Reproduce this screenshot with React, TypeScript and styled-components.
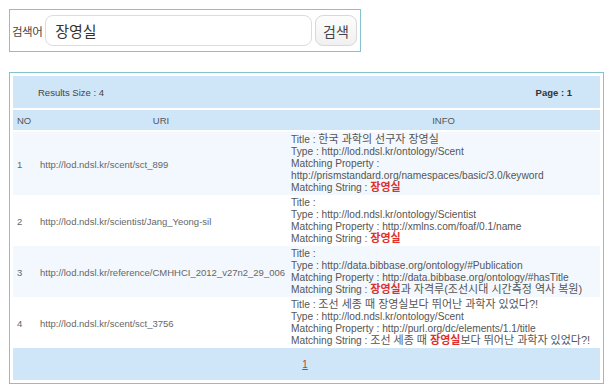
import styled, { createGlobalStyle } from 'styled-components';

const GlobalStyle = createGlobalStyle`
  body {
    margin: 0;
    background: #fff;
    font-family: "Liberation Sans", Arial, "Noto Sans CJK KR", sans-serif;
    color: #555;
  }
`;

const SearchBox = styled.form`
  margin: 9px 0 0 9px;
  width: 352px;
  height: 43px;
  box-sizing: border-box;
  border: 1px solid #84c3cb;
  display: flex;
  align-items: center;
  padding: 0 3px 0 2px;
  gap: 3px;
`;

const SearchLabel = styled.label`
  font-size: 11.5px;
  color: #444;
  letter-spacing: -0.5px;
`;

const SearchInput = styled.input`
  flex: 1;
  height: 31px;
  box-sizing: border-box;
  border: 1px solid #dcdcdc;
  border-radius: 8px;
  padding: 0 9px;
  font-size: 15px;
  color: #333;
  font-family: "Noto Sans CJK KR", sans-serif;
  outline: none;
`;

const SearchButton = styled.button`
  width: 42px;
  height: 31px;
  border: 1px solid #d8d8d8;
  border-radius: 8px;
  background: linear-gradient(#fdfdfd, #f0f0f0);
  font-size: 14px;
  color: #444;
  font-family: "Noto Sans CJK KR", sans-serif;
  padding: 0;
`;

const Panel = styled.div`
  margin: 20px 0 0 9px;
  width: 595px;
  box-sizing: border-box;
  border: 1px solid #84c3cb;
  padding: 3px;
`;

const Bar = styled.div<{ $center?: boolean }>`
  height: 32px;
  background: #cfe5f8;
  display: flex;
  align-items: center;
  justify-content: ${p => (p.$center ? 'center' : 'space-between')};
  padding: 0 28px 0 25px;
  font-size: 9.5px;
  color: #444;
`;

const PageLabel = styled.span`
  font-weight: bold;
  color: #333;
`;

const Table = styled.table`
  width: 100%;
  table-layout: fixed;
  border-collapse: collapse;
  margin: 2px 0 0;
`;

const HeadCell = styled.th<{ $w?: number; $left?: boolean }>`
  box-sizing: border-box;
  background: #cfe5f8;
  height: 21px;
  font-weight: normal;
  font-size: 9.5px;
  color: #555;
  text-align: ${p => (p.$left ? 'left' : 'center')};
  padding: 0 4px;
  width: ${p => (p.$w ? `${p.$w}px` : 'auto')};
  border-bottom: 2px solid #fff;
`;

const Row = styled.tr<{ $alt: boolean }>`
  background: ${p => (p.$alt ? '#f2f8fd' : '#fff')};
`;

const Cell = styled.td<{ $pl: number }>`
  box-sizing: border-box;
  padding: 2px 2px 1px ${p => p.$pl}px;
  vertical-align: middle;
  color: #666;
  font-size: 9.5px;
  white-space: nowrap;
`;

const InfoCell = styled.td`
  box-sizing: border-box;
  padding: 2px 4px 1px;
  font-size: 10.2px;
  color: #555;
  white-space: nowrap;
`;

const InfoLine = styled.div`
  line-height: 12px;
`;

const Ko = styled.span`
  font-size: 11px;
  line-height: 9px;
`;

const Hit = styled(Ko)`
  color: #e0302e;
  font-weight: bold;
`;

const PageLink = styled.a`
  font-size: 10px;
  text-decoration: underline;
  &, &:visited {
    color: #e0302e;
  }
`;

type Result = {
  uri: string;
  lines: React.ReactNode[];
};

const results: Result[] = [
  {
    uri: 'http://lod.ndsl.kr/scent/sct_899',
    lines: [
      <>Title : <Ko>한국 과학의 선구자 장영실</Ko></>,
      'Type : http://lod.ndsl.kr/ontology/Scent',
      'Matching Property :',
      'http://prismstandard.org/namespaces/basic/3.0/keyword',
      <>Matching String : <Hit>장영실</Hit></>,
    ],
  },
  {
    uri: 'http://lod.ndsl.kr/scientist/Jang_Yeong-sil',
    lines: [
      'Title :',
      'Type : http://lod.ndsl.kr/ontology/Scientist',
      'Matching Property : http://xmlns.com/foaf/0.1/name',
      <>Matching String : <Hit>장영실</Hit></>,
    ],
  },
  {
    uri: 'http://lod.ndsl.kr/reference/CMHHCI_2012_v27n2_29_006',
    lines: [
      'Title :',
      'Type : http://data.bibbase.org/ontology/#Publication',
      'Matching Property : http://data.bibbase.org/ontology/#hasTitle',
      <>Matching String : <Hit>장영실</Hit><Ko>과 자격루(조선시대 시간측정 역사 복원)</Ko></>,
    ],
  },
  {
    uri: 'http://lod.ndsl.kr/scent/sct_3756',
    lines: [
      <>Title : <Ko>조선 세종 때 장영실보다 뛰어난 과학자 있었다?!</Ko></>,
      'Type : http://lod.ndsl.kr/ontology/Scent',
      'Matching Property : http://purl.org/dc/elements/1.1/title',
      <>Matching String : <Ko>조선 세종 때 </Ko><Hit>장영실</Hit><Ko>보다 뛰어난 과학자 있었다?!</Ko></>,
    ],
  },
];

export default function App() {
  return (
    <>
      <GlobalStyle />
      <SearchBox onSubmit={e => e.preventDefault()}>
        <SearchLabel>검색어</SearchLabel>
        <SearchInput defaultValue="장영실" />
        <SearchButton type="submit">검색</SearchButton>
      </SearchBox>

      <Panel>
        <Bar>
          <span>Results Size : 4</span>
          <PageLabel>Page : 1</PageLabel>
        </Bar>
        <Table>
          <thead>
            <tr>
              <HeadCell $w={22} $left>NO</HeadCell>
              <HeadCell $w={252}>URI</HeadCell>
              <HeadCell>INFO</HeadCell>
            </tr>
          </thead>
          <tbody>
            {results.map((r, i) => (
              <Row key={r.uri} $alt={i % 2 === 0}>
                <Cell $pl={4}>{i + 1}</Cell>
                <Cell $pl={5}>{r.uri}</Cell>
                <InfoCell>
                  {r.lines.map((l, j) => (
                    <InfoLine key={j}>{l}</InfoLine>
                  ))}
                </InfoCell>
              </Row>
            ))}
          </tbody>
        </Table>
        <Bar $center>
          <PageLink href="#">1</PageLink>
        </Bar>
      </Panel>
    </>
  );
}
